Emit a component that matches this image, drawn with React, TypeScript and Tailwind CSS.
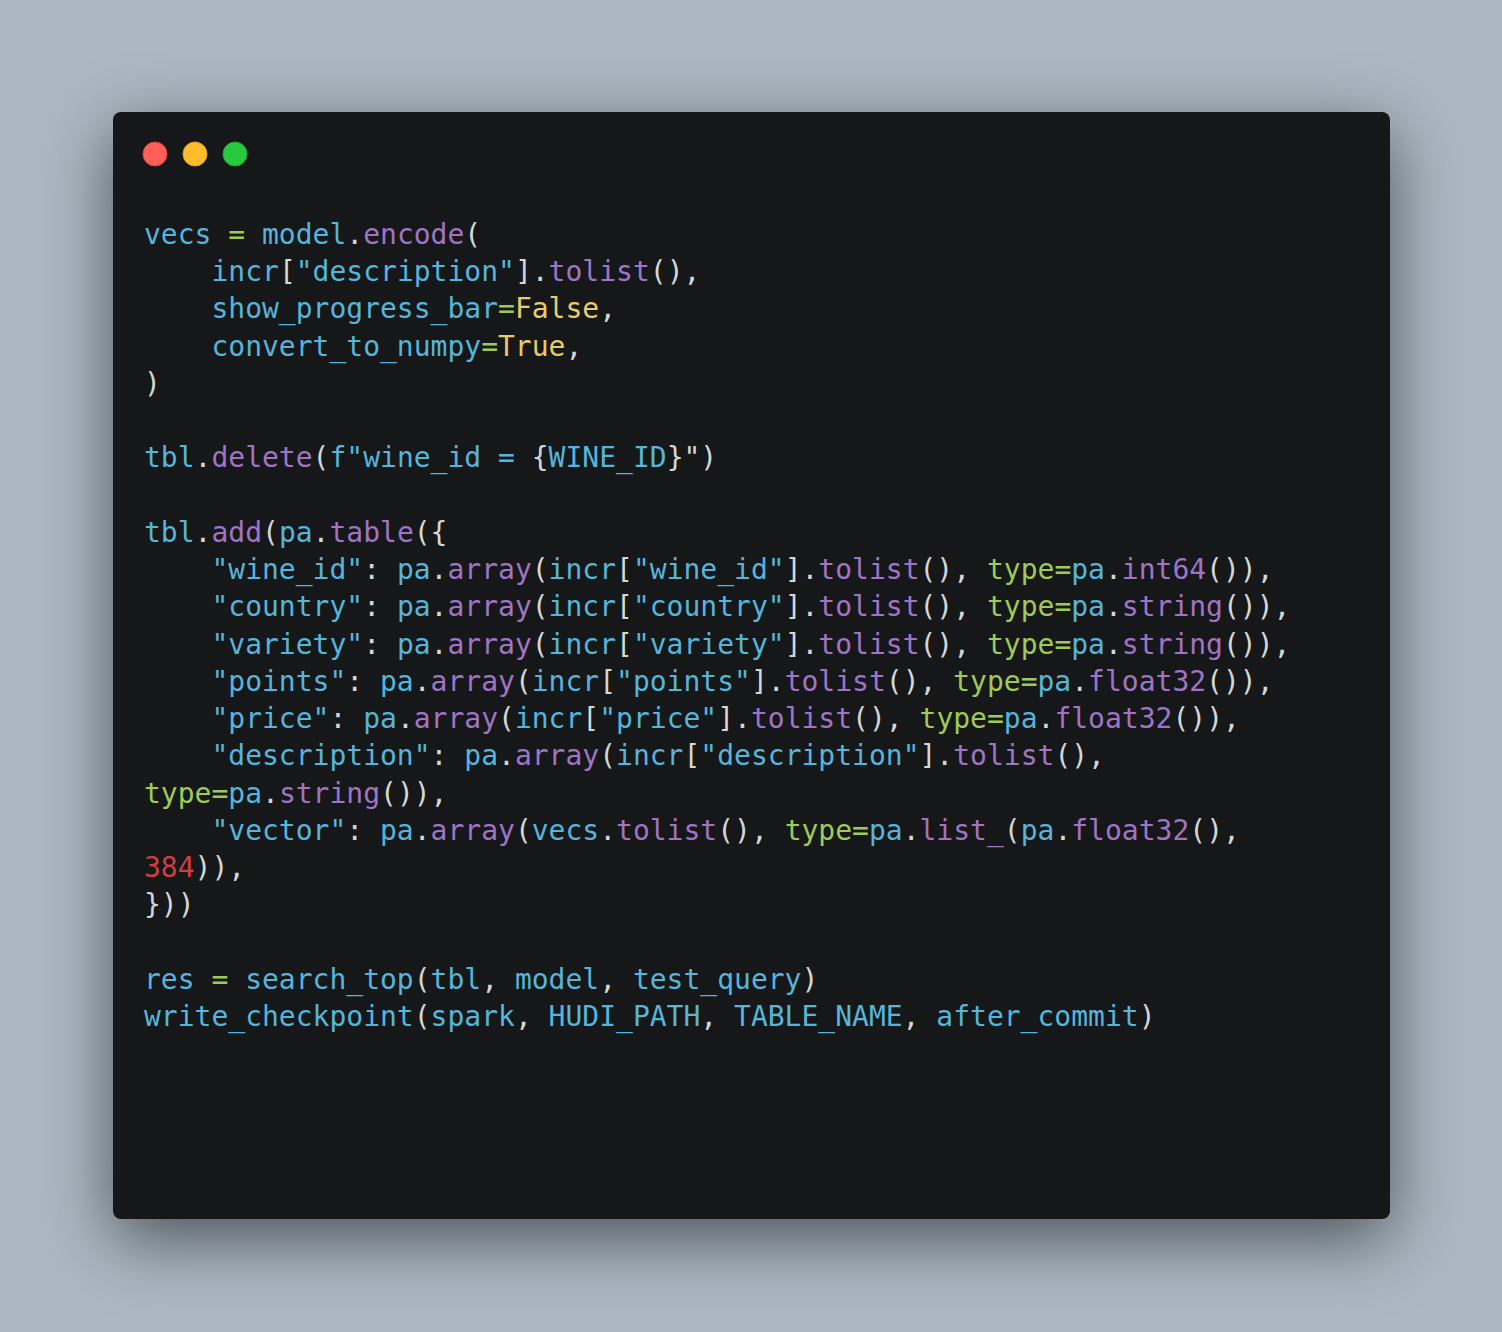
type Tone = 'v' | 'p' | 'g' | 'y' | 'r' | 'w'

// seti-like palette
const tone: Record<Tone, string> = {
  v: 'text-[#55b5db]',
  p: 'text-[#a074c4]',
  g: 'text-[#9fca56]',
  y: 'text-[#e6cd69]',
  r: 'text-[#cd3f45]',
  w: 'text-[#d4d7d6]',
}

type Token = [Tone, string]

const source: (string | Token[])[] = [
  'vecs = model.encode(',
  '    incr["description"].tolist(),',
  '    show_progress_bar=False,',
  '    convert_to_numpy=True,',
  ')',
  '',
  [
    ['v', 'tbl'],
    ['w', '.'],
    ['p', 'delete'],
    ['w', '('],
    ['v', 'f"wine_id = '],
    ['w', '{'],
    ['v', 'WINE_ID'],
    ['w', '}")'],
  ],
  '',
  'tbl.add(pa.table({',
  '    "wine_id": pa.array(incr["wine_id"].tolist(), type=pa.int64()),',
  '    "country": pa.array(incr["country"].tolist(), type=pa.string()),',
  '    "variety": pa.array(incr["variety"].tolist(), type=pa.string()),',
  '    "points": pa.array(incr["points"].tolist(), type=pa.float32()),',
  '    "price": pa.array(incr["price"].tolist(), type=pa.float32()),',
  '    "description": pa.array(incr["description"].tolist(),',
  'type=pa.string()),',
  '    "vector": pa.array(vecs.tolist(), type=pa.list_(pa.float32(),',
  '384)),',
  '}))',
  '',
  'res = search_top(tbl, model, test_query)',
  'write_checkpoint(spark, HUDI_PATH, TABLE_NAME, after_commit)',
]

function tokenize(line: string): Token[] {
  const out: Token[] = []
  const re = /("[^"]*")|([A-Za-z_][A-Za-z0-9_]*)|(\d+)|(\s+)|(.)/g
  let prev = ''
  let m: RegExpExecArray | null
  while ((m = re.exec(line))) {
    const [text, str, ident, num, space] = m
    if (space) {
      out.push(['w', text])
      continue
    }
    if (str) out.push(['v', text])
    else if (ident) {
      if (prev === '.') out.push(['p', text])
      else if (text === 'True' || text === 'False') out.push(['y', text])
      else if (text === 'type') out.push(['g', text])
      else out.push(['v', text])
    } else if (num) out.push(['r', text])
    else if (text === '=') out.push(['g', text])
    else out.push(['w', text])
    prev = text
  }
  return out
}

function Dots() {
  return (
    <svg width="110" height="28" viewBox="0 0 110 28">
      <circle cx="13" cy="14" r="12" fill="#ff5f56" stroke="#e0443e" strokeWidth="1" />
      <circle cx="53" cy="14" r="12" fill="#ffbd2e" stroke="#dea123" strokeWidth="1" />
      <circle cx="93" cy="14" r="12" fill="#27c93f" stroke="#1aab29" strokeWidth="1" />
    </svg>
  )
}

export default function App() {
  return (
    <div className="w-[1502px] h-[1332px] bg-[#abb8c3] pt-[112px] pl-[113px]">
      <div className="w-[1277px] h-[1107px] bg-[#151718] rounded-[8px] shadow-[0_20px_68px_rgba(0,0,0,0.55)] overflow-hidden">
        {/* window controls */}
        <div className="pt-[28px] pl-[29px] flex">
          <Dots />
        </div>

        {/* code */}
        <pre className="mt-[48px] pl-[31px] text-[28px] leading-[1.33] font-['DejaVu_Sans_Mono',monospace] whitespace-pre">
          {source.map((line, i) => {
            const tokens = typeof line === 'string' ? tokenize(line) : line
            return (
              <div key={i}>
                {tokens.length === 0
                  ? '\u00a0'
                  : tokens.map(([t, text], j) => (
                      <span key={j} className={tone[t]}>
                        {text}
                      </span>
                    ))}
              </div>
            )
          })}
        </pre>
      </div>
    </div>
  )
}
